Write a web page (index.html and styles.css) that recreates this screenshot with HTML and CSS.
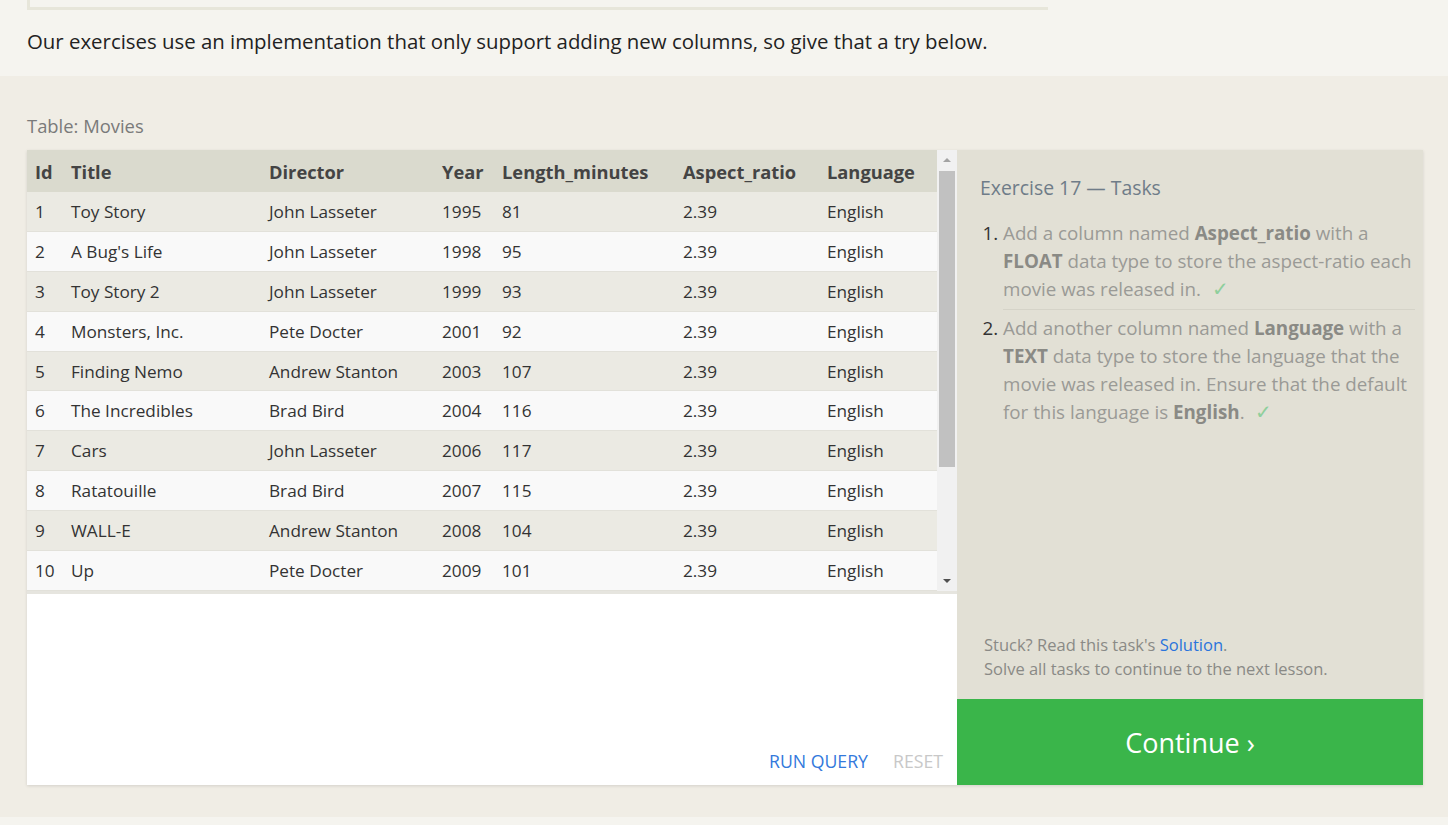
FILE: index.html
```html
<!DOCTYPE html>
<html>
<head>
<meta charset="utf-8">
<link rel="stylesheet" href="styles.css">
</head>
<body>
<section class="intro">
  <div class="prev-box"></div>
  <p class="intro-text">Our exercises use an implementation that only support adding new columns, so give that a try below.</p>
</section>
<section class="exercise">
  <div class="table-label">Table: Movies</div>
  <div class="workspace">
    <div class="editor">
      <div class="results">
        <div class="table-clip">
          <table class="movies">
            <colgroup>
              <col class="c-id"><col class="c-title"><col class="c-dir"><col class="c-year"><col class="c-len"><col class="c-asp"><col class="c-lang">
            </colgroup>
            <thead>
              <tr><th>Id</th><th>Title</th><th>Director</th><th>Year</th><th>Length_minutes</th><th>Aspect_ratio</th><th>Language</th></tr>
            </thead>
            <tbody>
              <tr><td>1</td><td>Toy Story</td><td>John Lasseter</td><td>1995</td><td>81</td><td>2.39</td><td>English</td></tr>
              <tr><td>2</td><td>A Bug's Life</td><td>John Lasseter</td><td>1998</td><td>95</td><td>2.39</td><td>English</td></tr>
              <tr><td>3</td><td>Toy Story 2</td><td>John Lasseter</td><td>1999</td><td>93</td><td>2.39</td><td>English</td></tr>
              <tr><td>4</td><td>Monsters, Inc.</td><td>Pete Docter</td><td>2001</td><td>92</td><td>2.39</td><td>English</td></tr>
              <tr><td>5</td><td>Finding Nemo</td><td>Andrew Stanton</td><td>2003</td><td>107</td><td>2.39</td><td>English</td></tr>
              <tr><td>6</td><td>The Incredibles</td><td>Brad Bird</td><td>2004</td><td>116</td><td>2.39</td><td>English</td></tr>
              <tr><td>7</td><td>Cars</td><td>John Lasseter</td><td>2006</td><td>117</td><td>2.39</td><td>English</td></tr>
              <tr><td>8</td><td>Ratatouille</td><td>Brad Bird</td><td>2007</td><td>115</td><td>2.39</td><td>English</td></tr>
              <tr><td>9</td><td>WALL-E</td><td>Andrew Stanton</td><td>2008</td><td>104</td><td>2.39</td><td>English</td></tr>
              <tr><td>10</td><td>Up</td><td>Pete Docter</td><td>2009</td><td>101</td><td>2.39</td><td>English</td></tr>
            </tbody>
          </table>
        </div>
        <div class="scrollbar">
          <div class="arrow arrow-up"></div>
          <div class="track"><div class="thumb"></div></div>
          <div class="arrow arrow-down"></div>
        </div>
      </div>
      <div class="query">
        <div class="query-actions">
          <span class="btn-run">RUN QUERY</span>
          <span class="btn-reset">RESET</span>
        </div>
      </div>
    </div>
    <aside class="tasks">
      <div class="tasks-body">
        <h3 class="tasks-title">Exercise 17 — Tasks</h3>
        <ol class="task-list">
          <li>Add a column named <b>Aspect_ratio</b> with a <b>FLOAT</b> data type to store the aspect-ratio each movie was released in. <span class="check">✓</span></li>
          <li>Add another column named <b>Language</b> with a <b>TEXT</b> data type to store the language that the movie was released in. Ensure that the default for this language is <b>English</b>. <span class="check">✓</span></li>
        </ol>
        <div class="tasks-help">
          <div>Stuck? Read this task's <a class="solution">Solution</a>.</div>
          <div>Solve all tasks to continue to the next lesson.</div>
        </div>
      </div>
      <div class="continue">Continue ›</div>
    </aside>
  </div>
</section>
<div class="footer-strip"></div>
</body>
</html>
```
FILE: styles.css
```css
html, body {
  margin: 0;
  padding: 0;
}
body {
  font-family: "Open Sans", "Noto Sans", sans-serif;
  background: #f5f4ef;
  color: #333;
  width: 1448px;
  height: 825px;
  overflow: hidden;
}
.intro {
  background: #f5f4ef;
  height: 76px;
  box-sizing: border-box;
}
.prev-box {
  margin-left: 27px;
  width: 1018px;
  height: 7px;
  border-left: 3px solid #e7e6da;
  border-bottom: 3px solid #e7e6da;
}
.intro-text {
  margin: 0;
  padding: 17px 0 0 27px;
  font-size: 20.4px;
  line-height: 28px;
  color: #222;
}
.exercise {
  background: #f0ede5;
  height: 741px;
  box-sizing: border-box;
  padding: 38px 25px 0 27px;
}
.table-label {
  font-size: 18.4px;
  line-height: 24px;
  color: #7a7a7a;
  margin-bottom: 12px;
}
.workspace {
  display: flex;
  height: 635px;
  box-shadow: 0 1px 3px rgba(0,0,0,0.12);
}
.editor {
  width: 930px;
  background: #fff;
  display: flex;
  flex-direction: column;
}
.results {
  display: flex;
  height: 444px;
  border-bottom: 3px solid #e6e5df;
  box-sizing: border-box;
}
.table-clip {
  width: 910px;
  overflow: hidden;
}
.movies {
  border-collapse: collapse;
  table-layout: fixed;
  width: 910px;
}
.c-id { width: 36px; }
.c-title { width: 198px; }
.c-dir { width: 173px; }
.c-year { width: 60px; }
.c-len { width: 181px; }
.c-asp { width: 144px; }
.c-lang { width: 118px; }
.movies th {
  text-align: left;
  font-weight: 700;
  font-size: 18.3px;
  color: #444;
  background: #dadace;
  height: 42px;
  padding: 0 0 0 8px;
  white-space: nowrap;
}
.movies td {
  font-size: 17.2px;
  color: #333;
  height: 38.9px;
  padding: 0 0 0 8px;
  border-bottom: 1px solid #e2e1da;
  white-space: nowrap;
}
.movies tbody tr:nth-child(odd) td { background: #ebeae3; }
.movies tbody tr:nth-child(even) td { background: #f9f9f9; }
.scrollbar {
  width: 20px;
  background: #f1f1f1;
  display: flex;
  flex-direction: column;
}
.arrow {
  height: 20px;
  position: relative;
}
.arrow::after {
  content: "";
  position: absolute;
  left: 6px;
  width: 0;
  height: 0;
  border-left: 4px solid transparent;
  border-right: 4px solid transparent;
}
.arrow-up::after {
  top: 8px;
  border-bottom: 4px solid #a3a3a3;
}
.arrow-down::after {
  top: 8px;
  border-top: 4px solid #505050;
}
.track {
  flex: 1;
  padding: 1px 2px 0 2px;
}
.thumb {
  height: 296px;
  background: #c1c1c1;
}
.query {
  flex: 1;
  display: flex;
  flex-direction: column;
  justify-content: flex-end;
}
.query-actions {
  display: flex;
  justify-content: flex-end;
  gap: 25px;
  padding: 0 14px 12px 0;
  font-size: 17.7px;
  line-height: 24px;
}
.btn-run { color: #3379dc; }
.btn-reset { color: #c8c8c8; }
.tasks {
  width: 466px;
  display: flex;
  flex-direction: column;
}
.tasks-body {
  flex: 1;
  background: #e2e0d5;
  padding: 24px 8px 0 23px;
  display: flex;
  flex-direction: column;
}
.tasks-title {
  margin: 0;
  font-weight: 400;
  font-size: 19.4px;
  line-height: 28px;
  color: #6f7c88;
}
.task-list {
  margin: 17px 0 0 0;
  padding: 0 0 0 23px;
  font-size: 18.8px;
  line-height: 28.2px;
  color: #9a9a96;
}
.task-list li {
  padding-bottom: 5px;
}
.task-list li + li {
  border-top: 1px solid #d5d3c8;
  padding-top: 4px;
}
.task-list li::marker {
  color: #333;
}
.task-list b {
  color: #8a8a85;
  font-weight: 700;
}
.check {
  color: #8fcf9c;
  margin-left: 6px;
  font-size: 20px;
  line-height: 20px;
}
.tasks-help {
  margin-top: auto;
  padding: 0 0 18px 4px;
  font-size: 16.5px;
  line-height: 24px;
  color: #8a8a86;
}
.solution { color: #2a74dc; }
.continue {
  height: 86px;
  background: #3ab54a;
  color: #fff;
  font-size: 27px;
  display: flex;
  align-items: center;
  justify-content: center;
}
.footer-strip {
  height: 8px;
  background: #f5f4ef;
}
```
